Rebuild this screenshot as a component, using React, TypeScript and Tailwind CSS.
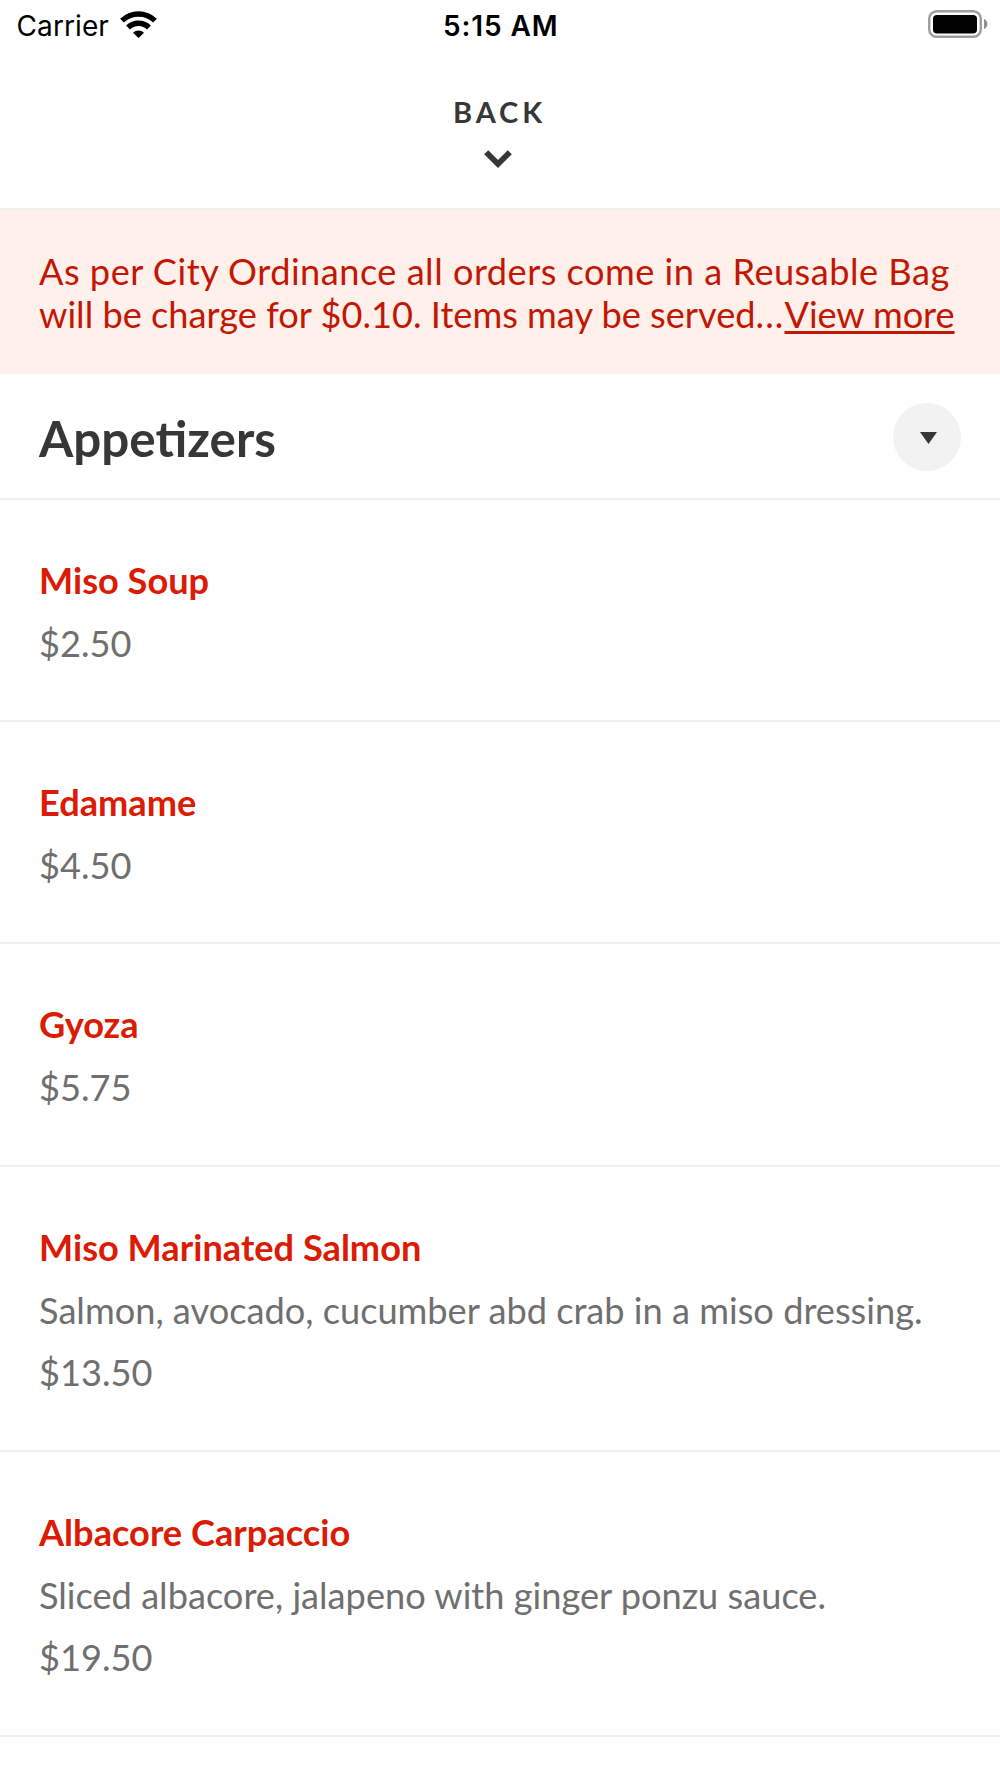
import clsx from 'clsx';

interface MenuItem {
  name: string;
  description?: string;
  price: string;
}

const ITEMS: MenuItem[] = [
  { name: 'Miso Soup', price: '$2.50' },
  { name: 'Edamame', price: '$4.50' },
  { name: 'Gyoza', price: '$5.75' },
  {
    name: 'Miso Marinated Salmon',
    description: 'Salmon, avocado, cucumber abd crab in a miso dressing.',
    price: '$13.50',
  },
  {
    name: 'Albacore Carpaccio',
    description: 'Sliced albacore, jalapeno with ginger ponzu sauce.',
    price: '$19.50',
  },
];

function StatusBar() {
  return (
    <div className="grid h-[50px] grid-cols-3 items-center pr-[12px] pl-[16.5px] font-['Inter',sans-serif] text-[28px] text-black">
      <div className="flex items-center gap-[11px]">
        <span className="pt-[2px] tracking-[0.1px]">Carrier</span>
        <svg className="mb-[2px]" width="37" height="27" viewBox="0 0 37 27" fill="none" stroke="#000" strokeWidth="5.400">
          <path d="M2 9.700a23.500 23.500 0 0 1 33 0" />
          <path d="M8 16.500a15 15 0 0 1 21 0" />
          <path d="M18.500 27l-5.500-5.200a8 8 0 0 1 11 0z" fill="#000" stroke="none" />
        </svg>
      </div>
      <span className="pt-[2px] pr-[3px] text-center font-semibold tracking-[0.9px]">5:15 AM</span>
      <svg className="mb-[2px] justify-self-end" width="60" height="28" viewBox="0 0 60 28">
        <rect x="1.2" y="1.2" width="51.600" height="25.600" rx="7.500" fill="none" stroke="#9d9d9d" strokeWidth="2.4" />
        <rect x="5" y="5" width="44" height="18.500" rx="4" />
        <path d="M56 9c4.500 1.500 4.500 8.500 0 10z" fill="#8f8f8f" />
      </svg>
    </div>
  );
}

function BackHeader() {
  return (
    <header className="flex h-[160px] flex-col items-center border-b-2 border-[#efefef] pt-[42px] text-[#373737]">
      <span className="mr-px text-[29px] leading-[40px] font-bold tracking-[3.9px]">BACK</span>
      <svg className="mt-[17px] mr-[4px]" width="30" height="20" viewBox="0 0 30 20" fill="none" stroke="#373737" strokeWidth="5.800">
        <path d="M3.200 3.200L15 15 26.800 3.200" />
      </svg>
    </header>
  );
}

function Notice() {
  return (
    <div className="h-[164px] bg-[#fff0eb] pt-[40px] pl-[39px] text-[36.2px] leading-[43.4px] whitespace-nowrap text-[#c21703]">
      <p className="tracking-[0.48px]">As per City Ordinance all orders come in a Reusable Bag</p>
      <p>
        will be charge for $0.10. Items may be served<span className="tracking-[1.1px]">...</span>
        <a className="tracking-[-0.1px] underline decoration-[2.5px] underline-offset-[3px]">View more</a>
      </p>
    </div>
  );
}

function MenuRow({ item }: { item: MenuItem }) {
  return (
    <li className={clsx('border-b-2 border-[#efefef] pt-[52px] pl-[39px]', item.description ? 'h-[285.2px]' : 'h-[222.2px]')}>
      <h3 className="text-[36.2px] leading-[56px] font-bold text-[#db1b03]">{item.name}</h3>
      {item.description && <p className="mt-[7px] text-[36.2px] leading-[56px] text-[#6f6f6f]">{item.description}</p>}
      <p className="mt-[6.5px] text-[36.2px] leading-[56px] text-[#6f6f6f]">{item.price}</p>
    </li>
  );
}

export default function App() {
  return (
    <main className="h-[1778px] w-[1000px] overflow-hidden bg-white font-['Lato',sans-serif]">
      <StatusBar />
      <BackHeader />
      <Notice />
      <div className="flex h-[126px] items-center justify-between border-b-2 border-[#efefef] pt-[2px] pr-[39px] pl-[39px]">
        <h2 className="pt-px text-[49.4px] leading-[60px] font-bold text-[#373737]">Appetizers</h2>
        <button className="flex size-[68px] items-center justify-center rounded-full bg-[#f2f2f2] pt-[2px] pl-[3px]">
          <svg width="17" height="12" viewBox="0 0 17 12" fill="#373737">
            <path d="M0 0h17L8.500 12z" />
          </svg>
        </button>
      </div>
      <ul>
        {ITEMS.map((item) => (
          <MenuRow key={item.name} item={item} />
        ))}
      </ul>
    </main>
  );
}
